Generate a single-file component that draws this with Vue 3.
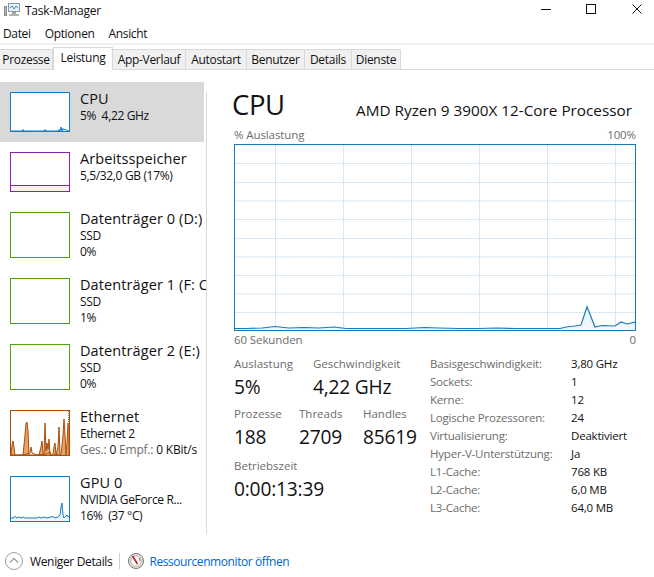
<script setup>
const menus = ['Datei', 'Optionen', 'Ansicht']
const tabs = [
  { name: 'Prozesse', w: 53 },
  { name: 'Leistung', w: 60, active: true },
  { name: 'App-Verlauf', w: 73 },
  { name: 'Autostart', w: 61 },
  { name: 'Benutzer', w: 58 },
  { name: 'Details', w: 47 },
  { name: 'Dienste', w: 49 }
]

const items = [
  { name: 'CPU', lines: ['5%  4,22 GHz'], h: 40, color: '#1a7ab8', kind: 'cpu', selected: true },
  { name: 'Arbeitsspeicher', lines: ['5,5/32,0 GB (17%)'], h: 40, color: '#8e1eb0', kind: 'mem' },
  { name: 'Datenträger 0 (D:)', lines: ['SSD', '0%'], h: 46, color: '#4da60c' },
  { name: 'Datenträger 1 (F: C:)', lines: ['SSD', '1%'], h: 46, color: '#4da60c' },
  { name: 'Datenträger 2 (E:)', lines: ['SSD', '0%'], h: 46, color: '#4da60c' },
  { name: 'Ethernet', lines: ['Ethernet 2'], extra: true, h: 46, color: '#a7500d', kind: 'eth' },
  { name: 'GPU 0', lines: ['NVIDIA GeForce R...', '16%  (37 °C)'], h: 46, color: '#1a7ab8', kind: 'gpu' }
]

const sparks = {
  cpu: '0,38 11,38 12,36.5 13,38 33,38 34,36.5 35,38 47,38 48,36.5 49,38 50,34 51,38 52,35.5 53,37 54,36 56,37.5 58,38',
  eth2: '0,44 4,44 12,44 19,42 20,36 21,42 26,44 36,43 39,41 40,44 48,44 49,44',
  gpu: '0,41 2,41 4,39.5 6,41 8,40 10,41 12,40 14,41 26,41 28,40 30,41 33,40 36,41 40,40 42,39.5 44,41 47,40 49,38 50,30 51,26 52,38 53,41 55,39 56,38 57,40 58,40'
}
const ethPeaks = '0,44 1,34 2,30 3,36 4,44 12,44 14,24 15,12 16,11 17,20 18,44 19,44 22,44 25,44 28,44 30,36 31,30 32,42 33,44 34,12 35,40 36,32 37,38 38,28 39,44 42,44 43,36 44,32 45,44 47,36 48,16 49,44 50,44 52,24 53,8 54,24 55,44 56,32 57,12 58,20 58,44'

const vLines = [41, 109, 177, 245, 313, 381]
const hLines = [19, 38, 56.5, 75, 94, 112.5, 131, 149.5, 168]
const chartLine = '0,184.5 12,184.5 28,184 41,182.5 55,184 70,183.5 85,184 100,183 112,184.5 140,184.5 172,184.5 190,183.5 205,184 225,184.5 245,184.5 262,184 282,184.5 310,184.5 326,184.5 332,183 341,182 347,181 353,162.7 361,183 368,181.5 381,182 387,178 393,180 402,178'
const chartFill = `0,186 ${chartLine} 402,186`

const stats = [
  ['Basisgeschwindigkeit:', '3,80 GHz'],
  ['Sockets:', '1'],
  ['Kerne:', '12'],
  ['Logische Prozessoren:', '24'],
  ['Virtualisierung:', 'Deaktiviert'],
  ['Hyper-V-Unterstützung:', 'Ja'],
  ['L1-Cache:', '768 KB'],
  ['L2-Cache:', '6,0 MB'],
  ['L3-Cache:', '64,0 MB']
]
const counts = [
  { label: 'Prozesse', value: '188', w: 65 },
  { label: 'Threads', value: '2709', w: 64 },
  { label: 'Handles', value: '85619', w: 60 }
]
</script>

<template>
  <div class="window">
    <header class="titlebar">
      <div class="title">
        <svg class="app-icon" width="17" height="14" viewBox="0 0 17 14">
          <rect x="0.5" y="3.5" width="2" height="9" fill="#b8b8b8" stroke="#8a8a8a" />
          <rect x="4.5" y="0.5" width="11" height="8" fill="#e4f1fa" stroke="#8d9aa3" />
          <polyline points="6,5 8,3 10,6 12,3 14,5" fill="none" stroke="#3b8fc4" stroke-width="1" />
          <rect x="8" y="9" width="4" height="2" fill="#9aa3a8" />
          <rect x="5" y="11" width="10" height="2" fill="#b5b5b5" />
        </svg>
        <span>Task-Manager</span>
      </div>
      <div class="controls">
        <svg width="134" height="20" viewBox="0 0 134 20">
          <line x1="21" y1="9.5" x2="31" y2="9.5" stroke="#111" />
          <rect x="66.5" y="4.5" width="9" height="9" fill="none" stroke="#111" />
          <path d="M112.5 4.5 L121.5 13.5 M121.5 4.5 L112.5 13.5" fill="none" stroke="#111" />
        </svg>
      </div>
    </header>

    <nav class="menu">
      <span v-for="m in menus" :key="m">{{ m }}</span>
    </nav>

    <div class="tabs">
      <span
        v-for="t in tabs"
        :key="t.name"
        class="tab"
        :class="{ active: t.active }"
        :style="{ width: t.w + 'px' }"
      >{{ t.name }}</span>
    </div>

    <main class="content">
      <aside class="sidebar">
        <div
          v-for="item in items"
          :key="item.name"
          class="item"
          :class="{ selected: item.selected }"
          :style="{ height: item.h + 20 + 'px' }"
        >
          <div class="thumb" :style="{ height: item.h + 'px', borderColor: item.color }">
            <svg
              v-if="item.kind && item.kind !== 'mem'"
              class="spark"
              :viewBox="`0 0 58 ${item.h - 2}`"
              width="58"
              :height="item.h - 2"
            >
              <g v-if="item.kind === 'eth'">
                <polygon :points="ethPeaks" fill="#e8a468" />
                <polyline :points="ethPeaks" fill="none" :stroke="item.color" stroke-width="1" />
                <polyline :points="sparks.eth2" fill="none" :stroke="item.color" stroke-width="1" />
                <line x1="57.5" y1="0" x2="57.5" y2="44" stroke="#e8632a" stroke-dasharray="1 1" />
              </g>
              <g v-else>
                <polygon :points="`0,${item.h - 2} ${sparks[item.kind]} 58,${item.h - 2}`" fill="#eef5fa" />
                <polyline :points="sparks[item.kind]" fill="none" :stroke="item.color" stroke-width="1" />
              </g>
            </svg>
            <div v-if="item.kind === 'mem'" class="mem-fill" :style="{ borderColor: item.color }"></div>
          </div>
          <div class="item-text">
            <div class="item-name">{{ item.name }}</div>
            <div v-for="l in item.lines" :key="l" class="item-line">{{ l }}</div>
            <div v-if="item.extra" class="item-line extra">
              <span class="muted">Ges.:</span> 0 <span class="muted">Empf.:</span> 0 KBit/s
            </div>
          </div>
        </div>
      </aside>

      <section class="panel">
        <div class="panel-head">
          <h1>CPU</h1>
          <div class="model">AMD Ryzen 9 3900X 12-Core Processor</div>
        </div>
        <div class="chart-labels top">
          <span>% Auslastung</span><span>100%</span>
        </div>
        <div class="chart">
          <svg width="400" height="185" viewBox="1 1 400 185">
            <line v-for="x in vLines" :key="'v' + x" :x1="x + 0.5" y1="0" :x2="x + 0.5" y2="187" stroke="#d9e8f3" />
            <line v-for="y in hLines" :key="'h' + y" x1="0" :y1="y + 0.5" x2="402" :y2="y + 0.5" stroke="#d9e8f3" />
            <polygon :points="chartFill" fill="#f1f6fb" />
            <polyline :points="chartLine" fill="none" stroke="#1a7ab8" stroke-width="1.2" />
          </svg>
        </div>
        <div class="chart-labels bottom">
          <span>60 Sekunden</span><span>0</span>
        </div>

        <div class="details">
          <div class="live">
            <div class="pair">
              <div class="stat first">
                <div class="label">Auslastung</div>
                <div class="value">5%</div>
              </div>
              <div class="stat">
                <div class="label">Geschwindigkeit</div>
                <div class="value">4,22 GHz</div>
              </div>
            </div>
            <div class="pair counts">
              <div v-for="c in counts" :key="c.label" class="stat" :style="{ width: c.w + 'px' }">
                <div class="label">{{ c.label }}</div>
                <div class="value">{{ c.value }}</div>
              </div>
            </div>
            <div class="stat uptime">
              <div class="label">Betriebszeit</div>
              <div class="value">0:00:13:39</div>
            </div>
          </div>
          <dl class="facts">
            <template v-for="s in stats" :key="s[0]">
              <dt>{{ s[0] }}</dt>
              <dd>{{ s[1] }}</dd>
            </template>
          </dl>
        </div>
      </section>
    </main>

    <footer class="footer">
      <svg width="18" height="18" viewBox="0 0 18 18">
        <circle cx="9" cy="9" r="8.5" fill="#fff" stroke="#a0a0a0" />
        <path d="M5 10.5 L9 6.5 L13 10.5" fill="none" stroke="#a0a0a0" stroke-width="1.4" />
      </svg>
      <span class="less">Weniger Details</span>
      <span class="sep"></span>
      <svg width="16" height="16" viewBox="0 0 16 16">
        <circle cx="8" cy="8" r="7.5" fill="#e9e6e0" stroke="#77706a" />
        <circle cx="8" cy="8" r="5.2" fill="#fff" stroke="#a99" stroke-width="0.8" />
        <path d="M4.5 3 L9.5 11" stroke="#c8242b" stroke-width="1.8" />
        <path d="M11 5 L12 8" stroke="#6f7d88" stroke-width="1" />
      </svg>
      <a class="link">Ressourcenmonitor öffnen</a>
    </footer>
  </div>
</template>

<style scoped>
.window {
  width: 654px;
  height: 577px;
  background: #fff;
  color: #111;
  font-family: "Open Sans", "Noto Sans", sans-serif;
  font-size: 12px;
  overflow: hidden;
  display: flex;
  flex-direction: column;
  position: relative;
}
.titlebar {
  height: 24px;
  display: flex;
  justify-content: space-between;
  align-items: flex-start;
}
.title {
  display: flex;
  align-items: center;
  gap: 4px;
  padding: 1px 0 0 4px;
  height: 18px;
  letter-spacing: -0.25px;
}
.controls {
  line-height: 0;
}
.menu {
  height: 19px;
  display: flex;
  gap: 14px;
  padding-left: 3px;
  align-items: center;
  border-bottom: 2px solid #f0f0f0;
  letter-spacing: -0.35px;
}
.tabs {
  height: 22px;
  margin-top: 2px;
  display: flex;
  align-items: flex-end;
  border-bottom: 1px solid #d9d9d9;
  letter-spacing: -0.3px;
}
.tab {
  height: 20px;
  line-height: 19px;
  box-sizing: border-box;
  text-align: center;
  background: #f0f0f0;
  border: 1px solid #d9d9d9;
  border-bottom: 0;
  border-left: 0;
  white-space: nowrap;
}
.tab.active {
  height: 23px;
  line-height: 19px;
  background: #fff;
  border-left: 1px solid #d9d9d9;
  margin-bottom: -1px;
}
.content {
  flex: 1;
  display: flex;
  min-height: 0;
  padding-top: 12px;
}
.sidebar {
  width: 207px;
  height: 452px;
  box-sizing: border-box;
  flex: none;
  overflow: hidden;
  position: relative;
}
.sidebar::after {
  content: "";
  position: absolute;
  right: 0;
  top: 10px;
  bottom: 0;
  width: 1px;
  background: #d9d9d9;
}
.item {
  width: 204px;
  padding: 10px 0 0 10px;
  box-sizing: border-box;
  display: flex;
  gap: 10px;
  white-space: nowrap;
}
.item.selected {
  background: #d9d9d9;
}
.thumb {
  width: 60px;
  box-sizing: border-box;
  border: 1px solid;
  background: #fff;
  flex: none;
  display: flex;
  flex-direction: column;
  justify-content: flex-end;
  overflow: hidden;
}
.spark {
  display: block;
}
.mem-fill {
  height: 5px;
  background: #f4f2f4;
  border-top: 1px solid;
}
.item-text {
  min-width: 0;
  width: 124px;
  margin-top: -3px;
}
.item-name {
  font-size: 14.5px;
  line-height: 19px;
  letter-spacing: 0.1px;
}
.item-line {
  font-size: 12px;
  line-height: 16px;
  letter-spacing: -0.35px;
  white-space: pre;
}
.extra {
  white-space: nowrap;
  letter-spacing: -0.2px;
}
.muted {
  color: #6d6d6d;
}
.panel {
  flex: 1;
  min-width: 0;
  padding: 0 18px 0 27px;
}
.panel-head {
  display: flex;
  justify-content: space-between;
  align-items: flex-end;
  height: 41px;
  padding-right: 4px;
  margin-left: -2px;
}
h1 {
  margin: 0;
  font-size: 27.5px;
  line-height: 36px;
  font-weight: 400;
  letter-spacing: -0.4px;
}
.model {
  font-size: 15.3px;
  line-height: 20px;
  letter-spacing: 0;
  margin-bottom: 3px;
}
.chart-labels {
  display: flex;
  justify-content: space-between;
  color: #6d6d6d;
  font-size: 11.5px;
  line-height: 14px;
  letter-spacing: -0.1px;
}
.chart-labels.top {
  margin-top: 5px;
  height: 16px;
}
.chart-labels.bottom {
  margin-top: 2px;
  height: 15px;
}
.chart {
  width: 402px;
  height: 187px;
  box-sizing: border-box;
  border: 1px solid #1a7ab8;
  line-height: 0;
  overflow: hidden;
}
.details {
  display: flex;
  margin-top: 8px;
}
.live {
  width: 196px;
  flex: none;
}
.pair {
  display: flex;
}
.first {
  width: 79px;
}
.stat .label {
  color: #6d6d6d;
  font-size: 11.5px;
  line-height: 16px;
  letter-spacing: 0;
}
.stat .value {
  font-size: 19.2px;
  line-height: 30px;
  letter-spacing: -0.2px;
  white-space: nowrap;
}
.counts {
  margin-top: 4px;
}
.uptime {
  margin-top: 6px;
}
.facts {
  margin: -2px 0 0;
  display: grid;
  grid-template-columns: 141px 1fr;
  grid-auto-rows: 18px;
  align-items: center;
  font-size: 11.5px;
  letter-spacing: -0.2px;
  white-space: nowrap;
}
dt {
  color: #6d6d6d;
}
dd {
  margin: 0;
}
.footer {
  height: 24px;
  display: flex;
  align-items: center;
  padding-left: 5px;
  flex: none;
  margin-bottom: 4px;
}
.less {
  margin-left: 7px;
  letter-spacing: -0.35px;
}
.sep {
  width: 1px;
  height: 16px;
  background: #d0d0d0;
  margin: 0 8px 0 7px;
}
.link {
  margin-left: 5px;
  color: #0066cc;
  letter-spacing: -0.42px;
}
</style>
